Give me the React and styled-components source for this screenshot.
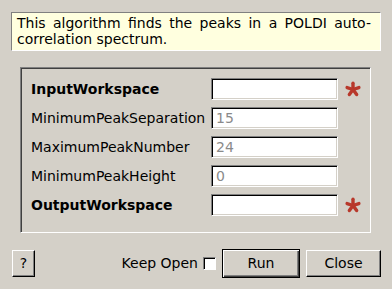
import React from "react";
import styled, { createGlobalStyle } from "styled-components";

const Global = createGlobalStyle`
  html, body { margin: 0; padding: 0; background: #d4d0c8; }
  body { font-family: "DejaVu Sans", "Liberation Sans", sans-serif; font-size: 14px; color: #000; }
`;

const Dialog = styled.div`
  width: 392px;
  height: 289px;
  box-sizing: border-box;
  padding: 12px 11px 0 11px;
  display: flex;
  flex-direction: column;
  background: #d4d0c8;
`;

const Description = styled.div`
  box-sizing: border-box;
  width: 370px;
  height: 39px;
  background: #ffffdf;
  border-top: 1px solid #808080;
  border-left: 1px solid #808080;
  border-right: 1px solid #ffffff;
  border-bottom: 1px solid #ffffff;
  padding: 2px 9px 0 5px;
  font-size: 14px;
  line-height: 16px;
  text-align: justify;
`;

const Group = styled.div`
  box-sizing: border-box;
  margin: 16px 0 0 9px;
  width: 351px;
  height: 166px;
  border-top: 1px solid #808080;
  border-left: 1px solid #808080;
  border-right: 1px solid #ffffff;
  border-bottom: 1px solid #ffffff;
  box-shadow: inset 1px 1px 0 #404040;
  padding: 10px 0 0 10px;
  display: flex;
  flex-direction: column;
  gap: 7px;
`;

const Row = styled.div`
  display: grid;
  grid-template-columns: 180px 127px 23px;
  align-items: center;
  height: 22px;
`;

const Label = styled.span`
  font-weight: ${(p) => (p.$bold ? "bold" : "normal")};
  white-space: nowrap;
`;

const Field = styled.div`
  box-sizing: border-box;
  height: 22px;
  background: #fff;
  border-top: 1px solid #808080;
  border-left: 1px solid #808080;
  border-right: 1px solid #ffffff;
  border-bottom: 1px solid #ffffff;
  box-shadow: inset 1px 1px 0 #000, inset -1px -1px 0 #d4d0c8;
  padding: 0 4px;
  line-height: 20px;
  color: #8a8a8a;
`;

const Star = styled.svg`
  justify-self: center;
  margin-left: 6px;
`;

const Footer = styled.div`
  display: flex;
  align-items: center;
  margin-top: 16px;
  height: 28px;
`;

const Button = styled.button`
  box-sizing: border-box;
  font-family: inherit;
  font-size: 14px;
  color: #000;
  background: #d4d0c8;
  height: ${(p) => (p.$default ? "29px" : "27px")};
  width: ${(p) => p.$w}px;
  margin-left: ${(p) => p.$ml || 0}px;
  padding: 0;
  border-top: 1px solid ${(p) => (p.$default ? "#000" : "#fff")};
  border-left: 1px solid ${(p) => (p.$default ? "#000" : "#fff")};
  border-right: 1px solid #000;
  border-bottom: 1px solid #000;
  box-shadow: ${(p) =>
    p.$default
      ? "inset 1px 1px 0 #fff, inset -1px -1px 0 #404040, inset -2px -2px 0 #808080"
      : "inset -1px -1px 0 #808080"};
`;

const CheckLabel = styled.span`
  margin-left: auto;
`;

const Check = styled.span`
  box-sizing: border-box;
  display: inline-block;
  width: 13px;
  height: 13px;
  margin: 1px 6px 0 5px;
  background: #fff;
  border-top: 1px solid #808080;
  border-left: 1px solid #808080;
  border-right: 1px solid #fff;
  border-bottom: 1px solid #fff;
  box-shadow: inset 1px 1px 0 #000;
`;

const Asterisk = () => (
  <Star width="18" height="16" viewBox="0 0 18 16">
    {[-90, -18, 54, 126, 198].map((a) => {
      const r = (a * Math.PI) / 180;
      return (
        <line
          key={a}
          x1="9"
          y1="8.5"
          x2={9 + 6.2 * Math.cos(r)}
          y2={8.5 + 6.2 * Math.sin(r)}
          stroke="#b8382b"
          strokeWidth="3.4"
          strokeLinecap="round"
        />
      );
    })}
  </Star>
);

const rows = [
  { label: "InputWorkspace", bold: true, value: "", req: true },
  { label: "MinimumPeakSeparation", value: "15" },
  { label: "MaximumPeakNumber", value: "24" },
  { label: "MinimumPeakHeight", value: "0" },
  { label: "OutputWorkspace", bold: true, value: "", req: true },
];

export default function App() {
  return (
    <>
      <Global />
      <Dialog>
        <Description>
          This algorithm finds the peaks in a POLDI auto-correlation spectrum.
        </Description>
        <Group>
          {rows.map((r) => (
            <Row key={r.label}>
              <Label $bold={r.bold}>{r.label}</Label>
              <Field>{r.value}</Field>
              {r.req ? <Asterisk /> : <span />}
            </Row>
          ))}
        </Group>
        <Footer>
          <Button $w={23} $ml={1}>?</Button>
          <CheckLabel>Keep Open</CheckLabel>
          <Check />
          <Button $default $w={78}>Run</Button>
          <Button $w={75} $ml={6}>Close</Button>
        </Footer>
      </Dialog>
    </>
  );
}
